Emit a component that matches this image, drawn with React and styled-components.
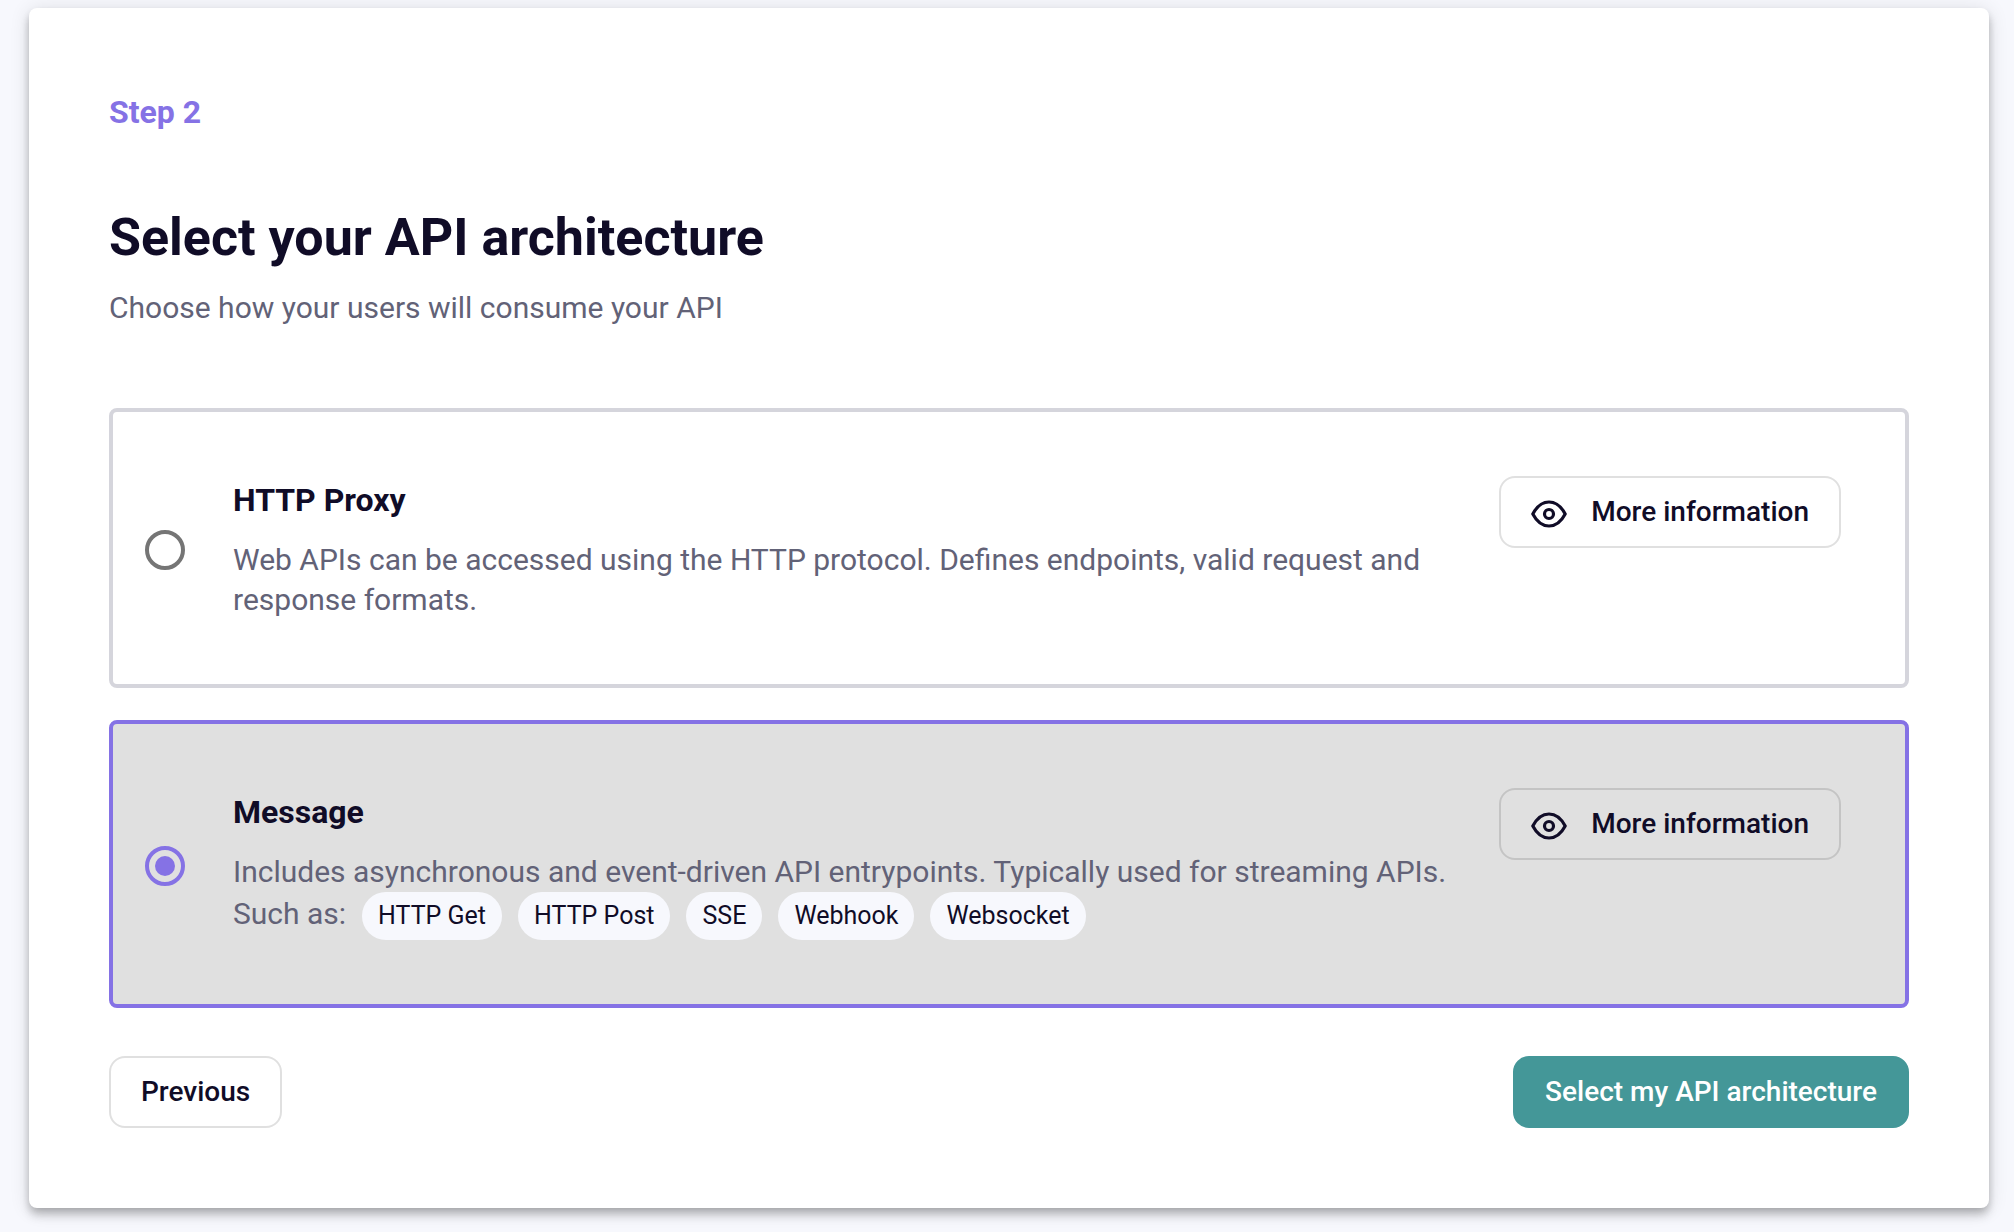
import React, { useState } from "react";
import styled, { createGlobalStyle, css } from "styled-components";

const colors = {
  page: "#f7f8fd",
  ink: "#100c27",
  muted: "#626277",
  accent: "#8572e5",
  outline: "#d5d5dc",
  teal: "#449798",
};

const GlobalStyle = createGlobalStyle`
  *, *::before, *::after { box-sizing: border-box; }
  body {
    margin: 0;
    background: ${colors.page};
    color: ${colors.ink};
    font-family: Roboto, "Liberation Sans", sans-serif;
    font-size: 30px;
    line-height: 40px;
  }
`;

const Page = styled.main`
  padding: 8px 25px 24px 29px;
`;

const StepCard = styled.form`
  display: flex;
  flex-direction: column;
  padding: 80px;
  border-radius: 8px;
  background: #fff;
  box-shadow:
    0 4px 8px -2px rgba(0, 0, 0, 0.2),
    0 8px 10px 0 rgba(0, 0, 0, 0.14),
    0 2px 20px 0 rgba(0, 0, 0, 0.12);
`;

const StepLabel = styled.p`
  margin: 0 0 72px;
  color: ${colors.accent};
  font-size: 32px;
  font-weight: 700;
  line-height: 48px;
`;

const Title = styled.h1`
  margin: 0 0 20px;
  font-size: 52px;
  font-weight: 700;
  line-height: 60px;
`;

const Subtitle = styled.p`
  margin: 0 0 80px;
  color: ${colors.muted};
`;

const Options = styled.div`
  display: flex;
  flex-direction: column;
  gap: 32px;
  margin-bottom: 48px;
`;

const OptionCard = styled.div`
  display: flex;
  align-items: flex-start;
  padding: 64px 64px 64px 32px;
  border: 4px solid ${(p) => (p.$selected ? colors.accent : colors.outline)};
  border-radius: 8px;
  background: ${(p) => (p.$selected ? "#e0e0e0" : "#fff")};
`;

const Radio = styled.input`
  appearance: none;
  display: grid;
  place-items: center;
  align-self: center;
  flex: none;
  width: 40px;
  height: 40px;
  margin: 4px 48px 0 0;
  border: 4px solid #757575;
  border-radius: 50%;
  cursor: pointer;

  &:checked {
    border-color: ${colors.accent};
  }

  &:checked::before {
    content: "";
    width: 20px;
    height: 20px;
    border-radius: 50%;
    background: ${colors.accent};
  }
`;

const OptionBody = styled.div`
  flex: 1;
  min-width: 0;
  margin-right: 32px;
`;

const OptionTitle = styled.label`
  display: block;
  margin-bottom: 16px;
  font-size: 32px;
  font-weight: 700;
  line-height: 48px;
  cursor: pointer;
`;

const OptionText = styled.p`
  margin: 0;
  color: ${colors.muted};
`;

const Examples = styled.div`
  display: flex;
  flex-wrap: wrap;
  gap: 16px;
  color: ${colors.muted};
  line-height: 44px;
`;

const Chip = styled.span`
  padding: 0 16px;
  border-radius: 24px;
  background: ${colors.page};
  color: ${colors.ink};
  font-size: 25px;
  line-height: 48px;
`;

const Button = styled.button`
  display: inline-flex;
  align-items: center;
  gap: 24px;
  flex: none;
  height: 72px;
  padding: 0 30px;
  border: 2px solid rgba(0, 0, 0, 0.12);
  border-radius: 16px;
  background: transparent;
  color: ${colors.ink};
  font-family: inherit;
  font-size: 28px;
  font-weight: 500;
  line-height: 40px;
  cursor: pointer;

  ${(p) =>
    p.$primary &&
    css`
      border-color: ${colors.teal};
      background: ${colors.teal};
      color: #fff;
    `}
`;

const Icon = styled.svg`
  width: 36px;
  height: 28px;
  margin-top: 4px;
`;

const Actions = styled.div`
  display: flex;
  justify-content: space-between;
`;

function EyeIcon() {
  return (
    <Icon viewBox="0 0 36 28" fill="none" stroke="currentColor" strokeWidth="3.2" aria-hidden="true">
      <path
        d="M1.8 14C6 6 11.500 2 18 2s12 4 16.200 12C30 22 24.500 26 18 26S6 22 1.800 14Z"
        strokeLinejoin="round"
      />
      <circle cx="18" cy="14" r="4.5" />
    </Icon>
  );
}

const architectures = [
  {
    id: "proxy",
    title: "HTTP Proxy",
    text: "Web APIs can be accessed using the HTTP protocol. Defines endpoints, valid request and response formats.",
  },
  {
    id: "message",
    title: "Message",
    text: "Includes asynchronous and event-driven API entrypoints. Typically used for streaming APIs.",
    examples: ["HTTP Get", "HTTP Post", "SSE", "Webhook", "Websocket"],
  },
];

function ArchitectureOption({ option, selected, onSelect }) {
  return (
    <OptionCard $selected={selected}>
      <Radio
        type="radio"
        name="architecture"
        id={option.id}
        value={option.id}
        checked={selected}
        onChange={() => onSelect(option.id)}
      />
      <OptionBody>
        <OptionTitle htmlFor={option.id}>{option.title}</OptionTitle>
        <OptionText>{option.text}</OptionText>
        {option.examples && (
          <Examples>
            <span>Such as:</span>
            {option.examples.map((name) => (
              <Chip key={name}>{name}</Chip>
            ))}
          </Examples>
        )}
      </OptionBody>
      <Button type="button">
        <EyeIcon />
        More information
      </Button>
    </OptionCard>
  );
}

export default function App() {
  const [selected, setSelected] = useState("message");
  return (
    <>
      <GlobalStyle />
      <Page>
        <StepCard onSubmit={(e) => e.preventDefault()}>
          <StepLabel>Step 2</StepLabel>
          <Title>Select your API architecture</Title>
          <Subtitle>Choose how your users will consume your API</Subtitle>
          <Options role="radiogroup" aria-label="API architecture">
            {architectures.map((option) => (
              <ArchitectureOption
                key={option.id}
                option={option}
                selected={selected === option.id}
                onSelect={setSelected}
              />
            ))}
          </Options>
          <Actions>
            <Button type="button">Previous</Button>
            <Button type="submit" $primary>
              Select my API architecture
            </Button>
          </Actions>
        </StepCard>
      </Page>
    </>
  );
}
